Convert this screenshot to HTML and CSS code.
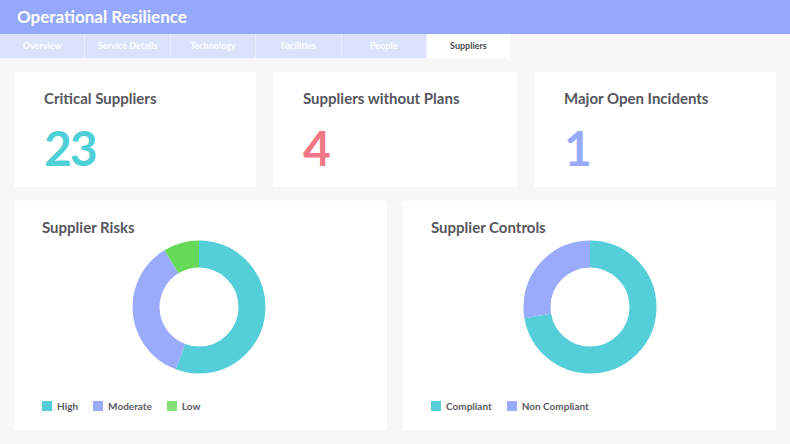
FILE: index.html
```html
<!DOCTYPE html>
<html>
<head>
<meta charset="utf-8">
<link rel="stylesheet" href="styles.css">
</head>
<body>
<header class="topbar">Operational Resilience</header>
<nav class="tabs">
  <div class="tab">Overview</div>
  <div class="tab">Service Details</div>
  <div class="tab">Technology</div>
  <div class="tab">Facilities</div>
  <div class="tab">People</div>
  <div class="tab active">Suppliers</div>
</nav>
<main class="content">
  <section class="kpis">
    <div class="card kpi">
      <div class="kpi-title">Critical Suppliers</div>
      <div class="kpi-value teal">23</div>
    </div>
    <div class="card kpi">
      <div class="kpi-title">Suppliers without Plans</div>
      <div class="kpi-value pink">4</div>
    </div>
    <div class="card kpi">
      <div class="kpi-title">Major Open Incidents</div>
      <div class="kpi-value blue">1</div>
    </div>
  </section>
  <section class="charts">
    <div class="card chart">
      <div class="chart-title">Supplier Risks</div>
      <div class="donut-wrap shift-left">
        <svg class="donut" width="134" height="134" viewBox="0 0 134 134">
          <g transform="rotate(-90 67 67)">
            <circle cx="67" cy="67" r="53" fill="none" stroke="#54ced9" stroke-width="27" pathLength="100" stroke-dasharray="55.7 44.3" stroke-dashoffset="0"/>
            <circle cx="67" cy="67" r="53" fill="none" stroke="#9aabfc" stroke-width="27" pathLength="100" stroke-dasharray="35.6 64.4" stroke-dashoffset="-55.7"/>
            <circle cx="67" cy="67" r="53" fill="none" stroke="#67d959" stroke-width="27" pathLength="100" stroke-dasharray="8.7 91.3" stroke-dashoffset="-91.3"/>
          </g>
        </svg>
      </div>
      <div class="legend">
        <span class="item"><i class="sw sw-teal"></i>High</span>
        <span class="item"><i class="sw sw-blue"></i>Moderate</span>
        <span class="item"><i class="sw sw-green"></i>Low</span>
      </div>
    </div>
    <div class="card chart">
      <div class="chart-title">Supplier Controls</div>
      <div class="donut-wrap">
        <svg class="donut" width="134" height="134" viewBox="0 0 134 134">
          <g transform="rotate(-90 67 67)">
            <circle cx="67" cy="67" r="53" fill="none" stroke="#54ced9" stroke-width="27" pathLength="100" stroke-dasharray="72.3 27.7" stroke-dashoffset="0"/>
            <circle cx="67" cy="67" r="53" fill="none" stroke="#9aabfc" stroke-width="27" pathLength="100" stroke-dasharray="27.7 72.3" stroke-dashoffset="-72.3"/>
          </g>
        </svg>
      </div>
      <div class="legend">
        <span class="item"><i class="sw sw-teal"></i>Compliant</span>
        <span class="item"><i class="sw sw-blue"></i>Non Compliant</span>
      </div>
    </div>
  </section>
</main>
</body>
</html>
```
FILE: styles.css
```css
* { box-sizing: border-box; }
html, body { margin: 0; padding: 0; }
body {
  width: 790px;
  height: 444px;
  overflow: hidden;
  background: #f7f6f9;
  font-family: "Lato", "Liberation Sans", sans-serif;
  color: #5a5a63;
}
.topbar {
  height: 34px;
  background: #94a9fc;
  color: #ffffff;
  font-size: 17px;
  font-weight: 700;
  line-height: 34px;
  padding-left: 17px;
}
.tabs {
  display: flex;
  height: 24px;
  background: #f9f6f9;
}
.tab {
  width: 85.4px;
  background: #dce2fb;
  border-right: 1px solid #e9edfd;
  color: #ffffff;
  font-size: 9px;
  font-weight: 700;
  line-height: 24px;
  text-align: center;
}
.tab.active {
  width: 83px;
  background: #ffffff;
  color: #4b4b52;
  border-right: none;
}
.content {
  padding: 14px;
  display: flex;
  flex-direction: column;
  gap: 14px;
}
.card { background: #ffffff; }
.kpis {
  display: grid;
  grid-template-columns: 242px 244px 242px;
  gap: 17px;
}
.kpi {
  height: 115px;
  padding: 16px 30px 0 30px;
}
.kpi-title {
  font-size: 15px;
  font-weight: 700;
  line-height: 20px;
  color: #56565e;
}
.kpi-value {
  font-size: 48px;
  font-weight: 700;
  line-height: 48px;
  margin-top: 16px;
  letter-spacing: -2px;
}
.teal { color: #4fcfd7; }
.pink { color: #f27888; }
.blue { color: #97aafb; }
.charts {
  display: grid;
  grid-template-columns: 373px 373px;
  gap: 16px;
}
.chart {
  height: 229px;
  padding: 16px 28px 0 28px;
  display: flex;
  flex-direction: column;
}
.chart-title {
  font-size: 15px;
  font-weight: 700;
  line-height: 20px;
  color: #56565e;
}
.donut-wrap {
  display: flex;
  justify-content: center;
  margin-top: 3px;
}
.donut-wrap.shift-left { padding-right: 3px; }
.donut { display: block; }
.legend {
  display: flex;
  gap: 15px;
  margin-top: 26px;
  font-size: 10px;
  font-weight: 700;
  color: #5a5a63;
  line-height: 12px;
}
.item { display: flex; align-items: center; }
.sw {
  display: inline-block;
  width: 10px;
  height: 10px;
  margin-right: 5px;
}
.sw-teal { background: #55ced9; }
.sw-blue { background: #9aabfc; }
.sw-green { background: #84df74; }
```
